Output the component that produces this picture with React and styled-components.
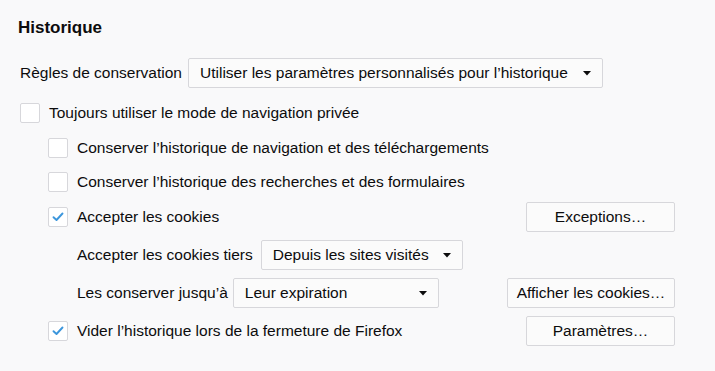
import React from 'react';
import styled, { createGlobalStyle } from 'styled-components';

const GlobalStyle = createGlobalStyle`
  html, body {
    margin: 0;
    padding: 0;
    background: #f9f9fa;
  }
  body {
    font-family: "Liberation Sans", Arial, sans-serif;
    font-size: 15.5px;
    color: #0c0c0d;
  }
`;

const Page = styled.div`
  width: 715px;
  height: 371px;
  box-sizing: border-box;
  padding: 18px 40px 0 18px;
  background: #f9f9fa;
`;

const Heading = styled.h2`
  margin: 0;
  font-size: 17px;
  line-height: 20px;
  font-weight: bold;
`;

const Row = styled.div`
  display: flex;
  align-items: center;
  justify-content: space-between;
  height: 30px;
  margin-top: ${(p) => p.$top}px;
  padding-left: ${(p) => p.$indent}px;
`;

const Group = styled.div`
  display: flex;
  align-items: center;
  gap: ${(p) => p.$gap || 8}px;
`;

const Label = styled.span`
  white-space: nowrap;
  line-height: 18px;
`;

const Box = styled.span`
  width: 20px;
  height: 20px;
  box-sizing: border-box;
  border: 1px solid #d7d7db;
  border-radius: 2px;
  background: #ffffff;
  display: flex;
  align-items: center;
  justify-content: center;
`;

const Select = styled.div`
  width: ${(p) => p.$width}px;
  height: 30px;
  box-sizing: border-box;
  border: 1px solid #d7d7db;
  border-radius: 2px;
  background: #fbfbfb;
  display: flex;
  align-items: center;
  justify-content: space-between;
  padding: 0 11px;
  white-space: nowrap;
`;

const Button = styled.div`
  width: ${(p) => p.$width}px;
  height: 30px;
  box-sizing: border-box;
  border: 1px solid #d7d7db;
  border-radius: 2px;
  background: #fbfbfb;
  display: flex;
  align-items: center;
  justify-content: center;
  white-space: nowrap;
`;

const Check = ({ checked }) => (
  <Box>
    {checked && (
      <svg width="12" height="10" viewBox="0 0 12 10">
        <path d="M1.5 5.2 L4.5 8 L10.5 1.5" fill="none" stroke="#3c96dc" strokeWidth="1.9" strokeLinecap="round" strokeLinejoin="round" />
      </svg>
    )}
  </Box>
);

const Arrow = () => (
  <svg width="8" height="5" viewBox="0 0 8 5">
    <path d="M0 0 L8 0 L4 4.5 Z" fill="#0c0c0d" />
  </svg>
);

const Dropdown = ({ width, value }) => (
  <Select $width={width}>
    <span>{value}</span>
    <Arrow />
  </Select>
);

const CheckRow = ({ top, indent, checked, label, children }) => (
  <Row $top={top} $indent={indent}>
    <Group $gap={9}>
      <Check checked={checked} />
      <Label>{label}</Label>
    </Group>
    {children}
  </Row>
);

export default function App() {
  return (
    <>
      <GlobalStyle />
      <Page>
        <Heading>Historique</Heading>
        <Row $top={20} $indent={2}>
          <Group $gap={6}>
            <Label>Règles de conservation</Label>
            <Dropdown width={415} value="Utiliser les paramètres personnalisés pour l’historique" />
          </Group>
        </Row>
        <CheckRow top={10} indent={2} label="Toujours utiliser le mode de navigation privée" />
        <CheckRow top={5} indent={30} label="Conserver l’historique de navigation et des téléchargements" />
        <CheckRow top={4} indent={30} label="Conserver l’historique des recherches et des formulaires" />
        <CheckRow top={5} indent={30} checked label="Accepter les cookies">
          <Button $width={149}>Exceptions…</Button>
        </CheckRow>
        <Row $top={8} $indent={59}>
          <Group $gap={8}>
            <Label>Accepter les cookies tiers</Label>
            <Dropdown width={202} value="Depuis les sites visités" />
          </Group>
        </Row>
        <Row $top={8} $indent={59}>
          <Group $gap={5}>
            <Label>Les conserver jusqu’à</Label>
            <Dropdown width={206} value="Leur expiration" />
          </Group>
          <Button $width={168}>Afficher les cookies…</Button>
        </Row>
        <CheckRow top={8} indent={30} checked label="Vider l’historique lors de la fermeture de Firefox">
          <Button $width={149}>Paramètres…</Button>
        </CheckRow>
      </Page>
    </>
  );
}
